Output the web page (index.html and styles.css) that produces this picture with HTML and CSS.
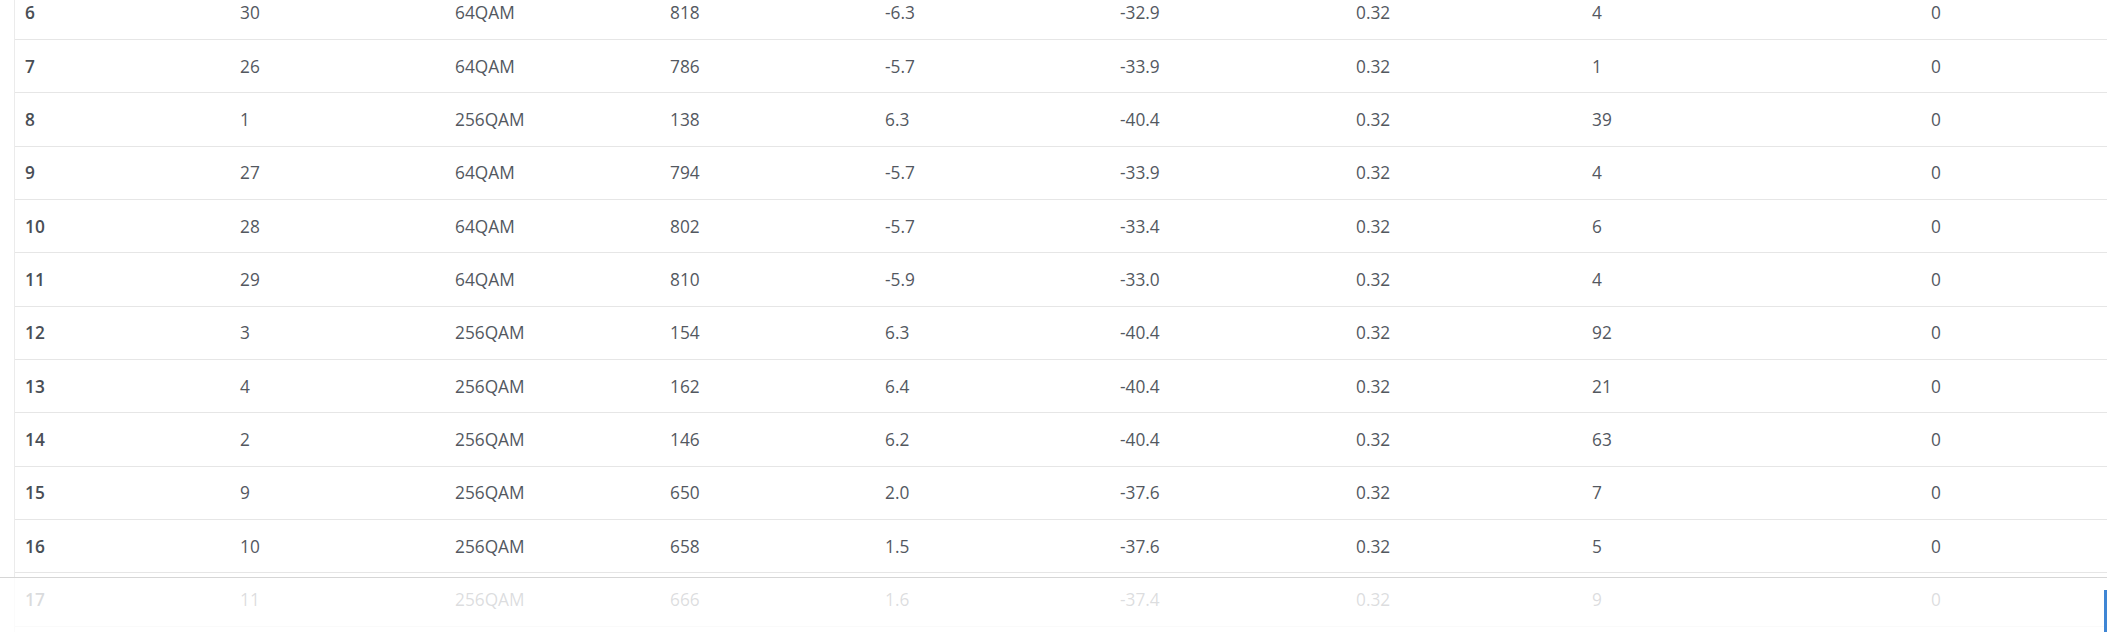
FILE: index.html
```html
<!DOCTYPE html>
<html>
<head>
<meta charset="utf-8">
<link rel="stylesheet" href="styles.css">
</head>
<body>
<div class="viewport">
  <div class="table">
    <div class="row"><div class="cell id">6</div><div class="cell">30</div><div class="cell">64QAM</div><div class="cell">818</div><div class="cell">-6.3</div><div class="cell">-32.9</div><div class="cell">0.32</div><div class="cell">4</div><div class="cell">0</div></div>
    <div class="row"><div class="cell id">7</div><div class="cell">26</div><div class="cell">64QAM</div><div class="cell">786</div><div class="cell">-5.7</div><div class="cell">-33.9</div><div class="cell">0.32</div><div class="cell">1</div><div class="cell">0</div></div>
    <div class="row"><div class="cell id">8</div><div class="cell">1</div><div class="cell">256QAM</div><div class="cell">138</div><div class="cell">6.3</div><div class="cell">-40.4</div><div class="cell">0.32</div><div class="cell">39</div><div class="cell">0</div></div>
    <div class="row"><div class="cell id">9</div><div class="cell">27</div><div class="cell">64QAM</div><div class="cell">794</div><div class="cell">-5.7</div><div class="cell">-33.9</div><div class="cell">0.32</div><div class="cell">4</div><div class="cell">0</div></div>
    <div class="row"><div class="cell id">10</div><div class="cell">28</div><div class="cell">64QAM</div><div class="cell">802</div><div class="cell">-5.7</div><div class="cell">-33.4</div><div class="cell">0.32</div><div class="cell">6</div><div class="cell">0</div></div>
    <div class="row"><div class="cell id">11</div><div class="cell">29</div><div class="cell">64QAM</div><div class="cell">810</div><div class="cell">-5.9</div><div class="cell">-33.0</div><div class="cell">0.32</div><div class="cell">4</div><div class="cell">0</div></div>
    <div class="row"><div class="cell id">12</div><div class="cell">3</div><div class="cell">256QAM</div><div class="cell">154</div><div class="cell">6.3</div><div class="cell">-40.4</div><div class="cell">0.32</div><div class="cell">92</div><div class="cell">0</div></div>
    <div class="row"><div class="cell id">13</div><div class="cell">4</div><div class="cell">256QAM</div><div class="cell">162</div><div class="cell">6.4</div><div class="cell">-40.4</div><div class="cell">0.32</div><div class="cell">21</div><div class="cell">0</div></div>
    <div class="row"><div class="cell id">14</div><div class="cell">2</div><div class="cell">256QAM</div><div class="cell">146</div><div class="cell">6.2</div><div class="cell">-40.4</div><div class="cell">0.32</div><div class="cell">63</div><div class="cell">0</div></div>
    <div class="row"><div class="cell id">15</div><div class="cell">9</div><div class="cell">256QAM</div><div class="cell">650</div><div class="cell">2.0</div><div class="cell">-37.6</div><div class="cell">0.32</div><div class="cell">7</div><div class="cell">0</div></div>
    <div class="row"><div class="cell id">16</div><div class="cell">10</div><div class="cell">256QAM</div><div class="cell">658</div><div class="cell">1.5</div><div class="cell">-37.6</div><div class="cell">0.32</div><div class="cell">5</div><div class="cell">0</div></div>
    <div class="row"><div class="cell id">17</div><div class="cell">11</div><div class="cell">256QAM</div><div class="cell">666</div><div class="cell">1.6</div><div class="cell">-37.4</div><div class="cell">0.32</div><div class="cell">9</div><div class="cell">0</div></div>
    <div class="row row-empty"></div>
  </div>
  <div class="footer-bar"><div class="footer-edge"></div></div>
</div>
</body>
</html>
```

FILE: styles.css
```css
html, body {
  margin: 0;
  padding: 0;
  background: #ffffff;
}

.viewport {
  width: 2107px;
  height: 632px;
  overflow: hidden;
  position: relative;
  font-family: "Open Sans", "Noto Sans", sans-serif;
  font-size: 17.3px;
  color: #53585f;
}

.table {
  margin-left: 14px;
  margin-top: -13.33px;
  border-left: 1px solid #ebebeb;
}

.row {
  display: grid;
  grid-template-columns: 215px 215px 215px 215px 235px 236px 236px 339px 1fr;
  height: 53.33px;
  box-sizing: border-box;
  border-bottom: 1px solid #e6e6e6;
  align-items: center;
}

.cell {
  padding-left: 10px;
  padding-top: 1px;
  white-space: nowrap;
  line-height: 20px;
}

.cell.id {
  font-weight: 600;
  color: #494e55;
}

.footer-bar {
  position: absolute;
  left: 0;
  right: 0;
  top: 577px;
  bottom: 0;
  background: rgba(255, 255, 255, 0.8);
  border-top: 1px solid #d6d6d6;
}

.footer-edge {
  position: absolute;
  right: 0;
  top: 12px;
  bottom: 0;
  width: 3px;
  background: #3f86d4;
}
```
